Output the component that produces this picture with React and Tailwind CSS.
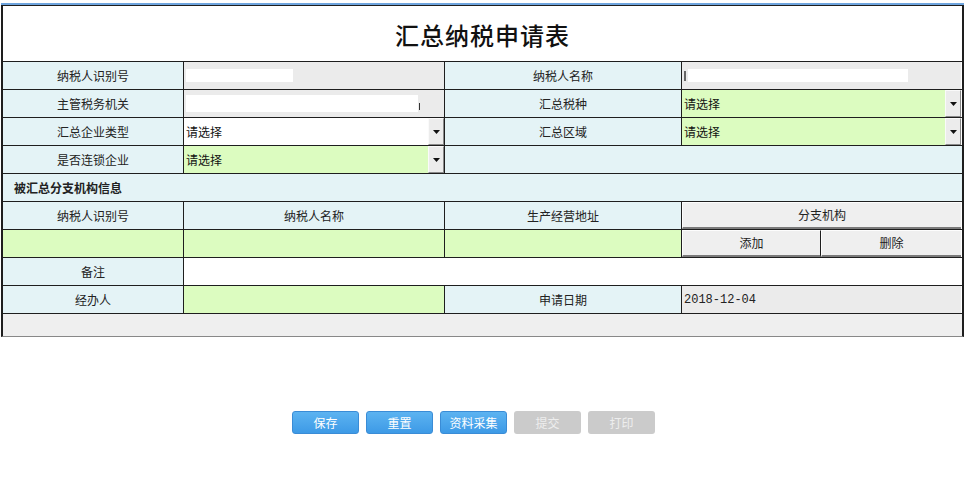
import React from 'react'

const font = { fontFamily: '"Noto Sans CJK SC", "Liberation Sans", sans-serif' }

const Label = ({ children, w, last }) => (
  <div className={`${w} h-full flex items-center justify-center bg-[#e4f3f6] text-[12px] text-[#222] ${last ? '' : 'border-r border-[#1e1e1e]'}`}>
    {children}
  </div>
)

const Arrow = () => (
  <div className="w-[16px] h-full flex items-center justify-center bg-[#ececec] border-l border-t border-[#fafafa] border-r border-r-[#8a8a8a] border-b border-b-[#8a8a8a]">
    <svg width="7" height="4" viewBox="0 0 7 4"><path d="M0 0h7L3.5 4z" fill="#111" /></svg>
  </div>
)

const Select = ({ w, bg, last }) => (
  <div className={`${w} h-full flex items-stretch ${bg} ${last ? '' : 'border-r border-[#1e1e1e]'}`}>
    <div className="flex-1 flex items-center pl-[2px] text-[12px] text-[#111]">请选择</div>
    <Arrow />
  </div>
)

const RaisedBtn = ({ children, w, last }) => (
  <div className={`${w} h-full flex items-center justify-center bg-[#efefef] text-[12px] text-[#222] border-t border-l border-[#fdfdfd] border-b-2 border-b-[#7a7a7a] ${last ? '' : 'border-r border-r-[#1e1e1e]'}`}>
    {children}
  </div>
)

const Row = ({ children, className = '' }) => (
  <div className={`flex h-[28px] border-b border-[#1e1e1e] ${className}`}>{children}</div>
)

const ActionBtn = ({ children, disabled }) => (
  <button
    className={`w-[67px] h-[23px] rounded-[3px] text-[12px] ${disabled ? 'bg-[#cbcbcb] text-[#eeeeee]' : 'bg-gradient-to-b from-[#5cb3f1] to-[#3d9ae6] border border-[#3a8cd6] text-white'}`}
  >
    {children}
  </button>
)

export default function App() {
  return (
    <div style={font} className="w-[965px] h-[478px] bg-white relative">
      <div className="pt-[3px] pl-[1px]">
        <div className="w-[963px] h-[2px] bg-[#6ea4de]" />
        <div className="w-[963px] border-l-2 border-r-2 border-[#1e1e1e] border-b border-b-[#888]">
          <div className="h-[57px] flex items-center justify-center border-t border-b border-[#1e1e1e]">
            <span className="text-[24px] font-medium text-[#111] tracking-[1px] pt-[2px]">汇总纳税申请表</span>
          </div>

          <Row>
            <Label w="w-[181px]">纳税人识别号</Label>
            <div className="w-[261px] h-full bg-[#ebebeb] border-r border-[#1e1e1e] flex items-center pl-[2px]">
              <div className="w-[107px] h-[13px] bg-white" />
            </div>
            <Label w="w-[237px]">纳税人名称</Label>
            <div className="w-[279px] h-full bg-[#ebebeb] flex items-center pl-[2px]">
              <span className="w-[2px] h-[10px] bg-[#666] mr-[2px]" />
              <div className="w-[220px] h-[13px] bg-white" />
            </div>
          </Row>

          <Row>
            <Label w="w-[181px]">主管税务机关</Label>
            <div className="w-[261px] h-full bg-[#ebebeb] border-r border-[#1e1e1e] flex items-center pl-[2px]">
              <div className="w-[232px] h-[17px] bg-white" />
              <span className="w-[1px] h-[7px] bg-[#333] mt-[6px] ml-[1px]" />
            </div>
            <Label w="w-[237px]">汇总税种</Label>
            <Select w="w-[279px]" bg="bg-[#dcfcc0]" last />
          </Row>

          <Row>
            <Label w="w-[181px]">汇总企业类型</Label>
            <Select w="w-[261px]" bg="bg-white" />
            <Label w="w-[237px]">汇总区域</Label>
            <Select w="w-[279px]" bg="bg-[#dcfcc0]" last />
          </Row>

          <Row>
            <Label w="w-[181px]">是否连锁企业</Label>
            <Select w="w-[261px]" bg="bg-[#dcfcc0]" />
            <div className="flex-1 h-full bg-[#e4f3f6]" />
          </Row>

          <Row className="bg-[#e4f3f6]">
            <div className="flex items-center pl-[11px] text-[12px] font-bold text-[#222]">被汇总分支机构信息</div>
          </Row>

          <Row>
            <Label w="w-[181px]">纳税人识别号</Label>
            <Label w="w-[261px]">纳税人名称</Label>
            <Label w="w-[237px]">生产经营地址</Label>
            <RaisedBtn w="w-[279px]" last>分支机构</RaisedBtn>
          </Row>

          <Row>
            <div className="w-[181px] h-full bg-[#dcfcc0] border-r border-[#1e1e1e]" />
            <div className="w-[261px] h-full bg-[#dcfcc0] border-r border-[#1e1e1e]" />
            <div className="w-[237px] h-full bg-[#dcfcc0] border-r border-[#1e1e1e]" />
            <RaisedBtn w="w-[139px]">添加</RaisedBtn>
            <RaisedBtn w="w-[140px]" last>删除</RaisedBtn>
          </Row>

          <Row>
            <Label w="w-[181px]">备注</Label>
            <div className="flex-1 h-full bg-white" />
          </Row>

          <Row>
            <Label w="w-[181px]">经办人</Label>
            <div className="w-[261px] h-full bg-[#dcfcc0] border-r border-[#1e1e1e]" />
            <Label w="w-[237px]">申请日期</Label>
            <div className="w-[279px] h-full bg-[#ebebeb] flex items-center pl-[2px] text-[12px] text-[#222]" style={{ fontFamily: '"Liberation Mono", "DejaVu Sans Mono", monospace' }}>
              2018-12-04
            </div>
          </Row>

          <div className="h-[22px] bg-[#efefef]" />
        </div>

        <div className="flex justify-center gap-[7px] mt-[74px] pr-[19px]">
          <ActionBtn>保存</ActionBtn>
          <ActionBtn>重置</ActionBtn>
          <ActionBtn>资料采集</ActionBtn>
          <ActionBtn disabled>提交</ActionBtn>
          <ActionBtn disabled>打印</ActionBtn>
        </div>
      </div>
    </div>
  )
}
